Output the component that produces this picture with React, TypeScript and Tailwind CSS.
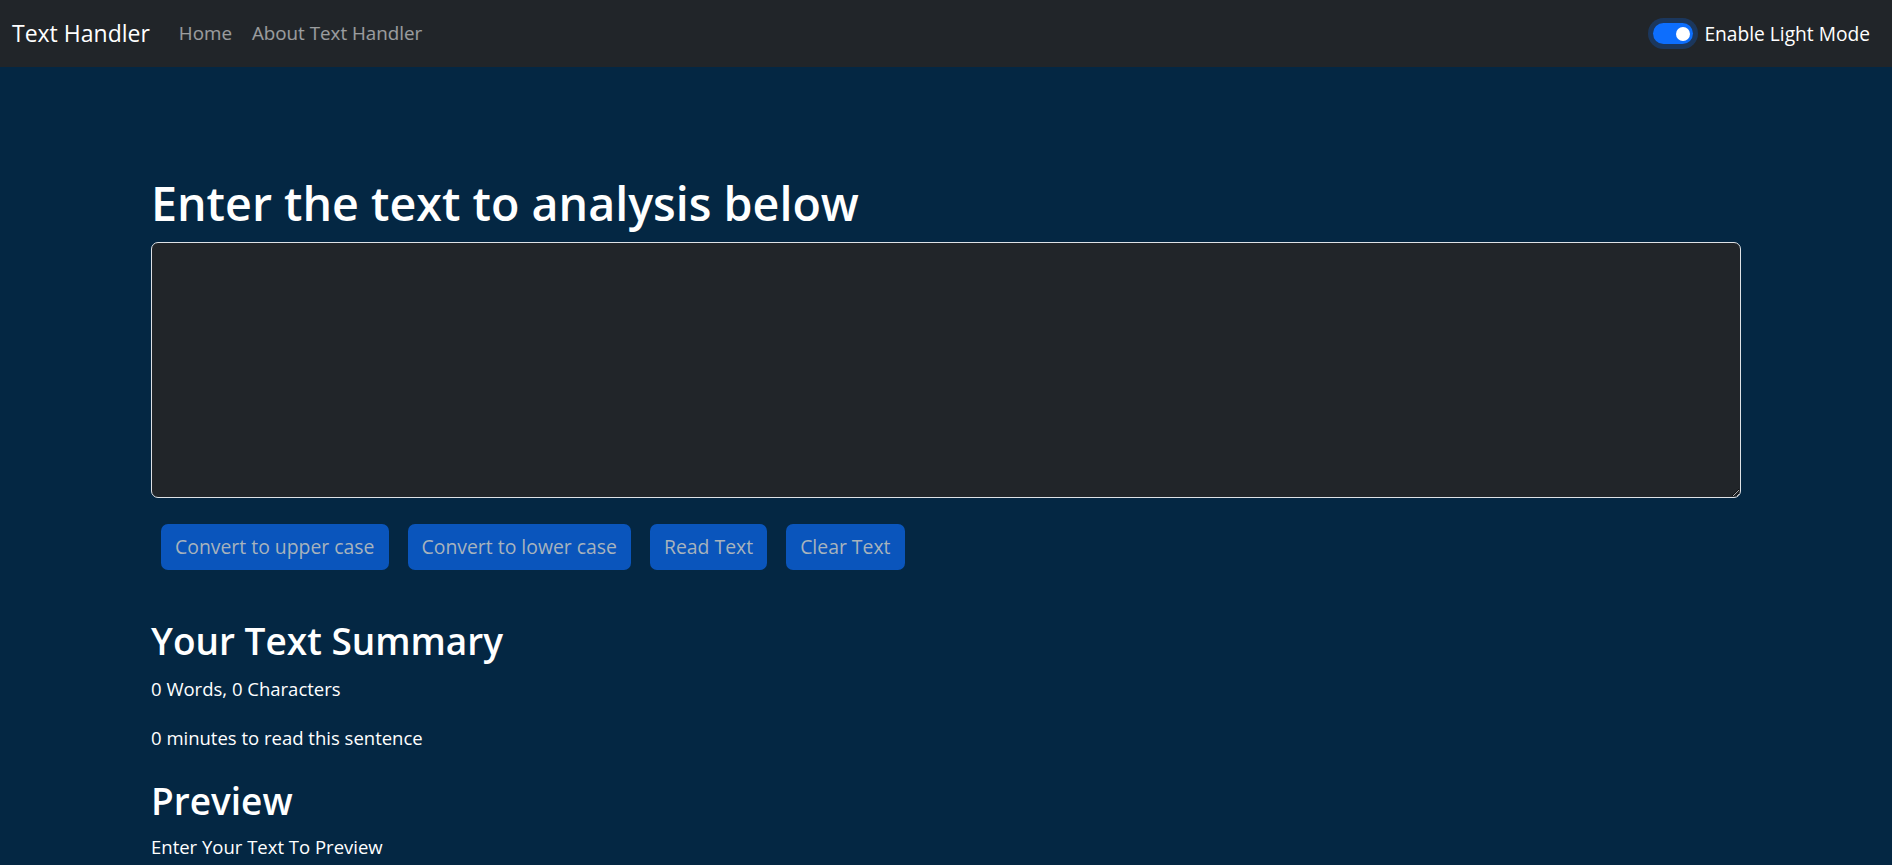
import { useState } from 'react'

const BUTTONS = ['Convert to upper case', 'Convert to lower case', 'Read Text', 'Clear Text']

export default function App() {
  const [text, setText] = useState('')

  const words = text.split(/\s+/).filter((w) => w.length > 0).length
  const minutes = 0.008 * words

  return (
    <div className="min-h-screen bg-[#042743] font-['Open_Sans',sans-serif] text-white">
      {/* Navbar */}
      <nav className="flex h-[67px] items-center justify-between bg-[#212529] pl-[12px] pr-[22px]">
        <div className="flex items-center">
          <span className="mr-[29px] text-[23px] leading-none text-white">Text Handler</span>
          <a className="mr-[20px] text-[18.8px] leading-none text-white/55">Home</a>
          <a className="text-[18.8px] leading-none text-white/55">About Text Handler</a>
        </div>
        <div className="flex items-center">
          {/* form-switch, checked + focused */}
          <div className="relative flex h-[21px] w-[40px] items-center justify-end rounded-full bg-[#0d6efd] pr-[3px] shadow-[0_0_0_5px_rgba(13,110,253,0.25)]">
            <div className="h-[14px] w-[14px] rounded-full bg-white" />
          </div>
          <span className="ml-[11px] text-[19.2px] leading-none text-white">Enable Light Mode</span>
        </div>
      </nav>

      <main className="mx-auto w-[1590px] pt-[107px]">
        <h1 className="mb-[10px] text-[46.6px] font-semibold leading-[58px]">Enter the text to analysis below</h1>
        <textarea
          value={text}
          onChange={(e) => setText(e.target.value)}
          className="block h-[256px] w-full resize-y rounded-[7px] border border-[#dee2e6] bg-[#212529] px-[14px] py-[7px] text-[19px] text-white outline-none"
        />

        <div className="mt-[26px] flex gap-[19px] px-[10px]">
          {BUTTONS.map((label) => (
            <button
              key={label}
              disabled={text.length === 0}
              className="h-[46px] rounded-[7px] bg-[#0a55bc] px-[14px] text-[19.4px] text-[#a7b3bd]"
            >
              {label}
            </button>
          ))}
        </div>

        <section className="mt-[48px]">
          <h2 className="mb-[10px] text-[37px] font-semibold leading-[46px]">Your Text Summary</h2>
          <p className="mb-[20px] text-[18.5px] leading-[29px]">
            {words} Words, {text.length} Characters
          </p>
          <p className="mb-[26px] text-[18.5px] leading-[29px]">{minutes} minutes to read this sentence</p>
          <h2 className="mb-[8px] text-[37px] font-semibold leading-[46px]">Preview</h2>
          <p className="text-[18.5px] leading-[29px]">{text.length > 0 ? text : 'Enter Your Text To Preview'}</p>
        </section>
      </main>
    </div>
  )
}
